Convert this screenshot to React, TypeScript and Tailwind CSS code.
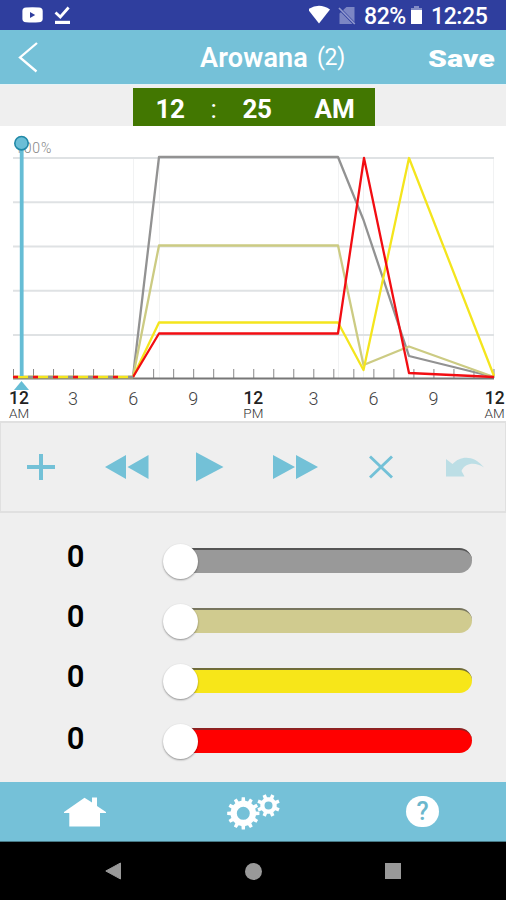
import React from "react";

const BLUE = "#73c1d7";

function gearPath(cx: number, cy: number, outer: number, inner: number, hole: number, teeth: number, phase: number) {
  const pts: string[] = [];
  const step = (Math.PI * 2) / teeth;
  const at = (r: number, a: number) => `${(cx + r * Math.cos(a)).toFixed(2)} ${(cy + r * Math.sin(a)).toFixed(2)}`;
  for (let i = 0; i < teeth; i++) {
    const a = phase + i * step;
    pts.push(at(inner, a - step * 0.28), at(outer, a - step * 0.19), at(outer, a + step * 0.19), at(inner, a + step * 0.28));
  }
  return `M${pts.join("L")}Z M${cx - hole} ${cy}a${hole} ${hole} 0 1 0 ${hole * 2} 0a${hole} ${hole} 0 1 0 ${-hole * 2} 0Z`;
}

function StatusBar() {
  return (
    <div className="flex h-[30px] items-center bg-[#2f3e9e] pr-[18px] pl-[22px] text-white">
      <svg width="50" height="30" viewBox="0 0 50 30" fill="white">
        <path fillRule="evenodd" d="M4 7.6Q10.500 7 17 7.600Q20.700 7.800 20.700 11V19Q20.700 22 17 22.300Q10.500 22.900 4 22.300Q.4 22 .4 19V11Q.4 7.800 4 7.600ZM8 12V18L13.200 15Z" />
        <path d="M33 20.800H48V24H33Z" />
        <path d="M33.500 12.500L38.300 17L46.600 7.500" fill="none" stroke="white" strokeWidth="2.800" />
      </svg>
      <svg className="ml-auto" width="52" height="30" viewBox="0 0 52 30">
        <path d="M.5 9.500Q11.500 2 22.500 9.500L11.500 23.500Z" fill="white" transform="translate(-1.500 0)" />
        <path d="M35 9.300L37.500 7H45.500V24H30.500V13.500Z" fill="#7c86c4" />
        <path d="M28.500 6.500L46.500 25" stroke="#2f3e9e" strokeWidth="3" />
        <path d="M30 8L45.800 24" stroke="#929ace" strokeWidth="1.700" />
      </svg>
      <span className="mt-[4px] ml-[3px] w-[41px] text-[23px] leading-[30px] font-medium tracking-[-0.4px]">82%</span>
      <svg className="ml-[5px]" width="13" height="30" viewBox="0 0 13 30">
        <path d="M4 6H9V8H12V24H1V8H4Z" fill="#818bc6" />
        <path d="M1 10H12V24H1Z" fill="white" />
      </svg>
      <span className="mt-[4px] ml-[8px] w-[57px] text-[23px] leading-[30px] font-medium tracking-[-0.4px]">12:25</span>
    </div>
  );
}

function Header() {
  return (
    <header className="flex h-[55px] items-center border-b border-[#e6f3f6] bg-[#75c1d8] pr-[11px] pl-[18px] text-white">
      <svg width="22" height="34" viewBox="0 0 22 34" fill="none" stroke="white" strokeWidth="2.300">
        <path d="M19 3L2 17.500L18.500 31.500" />
      </svg>
      <h1 className="ml-[160px] w-[108px] pt-px text-[27px] leading-[54px] font-semibold tracking-[0.2px]">Arowana</h1>
      <span className="ml-[9px] pt-[2px] text-[23px] tracking-[-0.3px]">(2)</span>
      <span className="ml-auto w-[67px] origin-left scale-x-[1.26] pt-[3px] text-[24px] font-black">Save</span>
    </header>
  );
}

function TimeRow() {
  return (
    <div className="flex h-[41px] justify-center bg-[#efefef] pt-[3px] pl-px text-[26px] leading-[42px] font-bold text-white">
      <div className="flex w-[242px] bg-[#427701] pl-[23px]">
        <span className="w-[55px] tracking-[-0.4px]">12</span>
        <span className="w-[32px] font-normal">:</span>
        <span className="w-[72px] tracking-[-0.4px]">25</span>
        <span>AM</span>
      </div>
    </div>
  );
}

const SERIES = [
  { color: "#929292", points: "13,251 133,251 159,31 338,31 363.500,94 409,230 494,251" },
  { color: "#cccb83", points: "133,251 159,119.500 338,119.500 363.500,239 409,220.500 494,251" },
  { color: "#f4e51d", points: "133,251 159,196.500 338,196.500 363.500,244 409,32 494,250" },
  { color: "#f20d12", points: "133,251 159,207.500 338,207.500 364,32 409,247 494,251" },
];
const HOURS = ["12", "3", "6", "9", "12", "3", "6", "9", "12"];
const PERIOD: Record<number, string> = { 0: "AM", 4: "PM", 8: "AM" };

function Chart() {
  return (
    <section className="h-[295px] bg-white">
      <svg className="block" width="506" height="264" viewBox="0 0 506 264">
        <text x="15" y="27" fontSize="14" fontWeight="300" letterSpacing="0.9" fill="#858585">100%</text>
        {[133.5, 159.5, 338.5, 363.5, 408.5, 493.5].map((x) => (
          <path key={x} d={`M${x} 32V252`} stroke="#f1f2f3" strokeWidth="1" />
        ))}
        {[32, 76.2, 120.5, 164.800, 209].map((y) => (
          <path key={y} d={`M13 ${y}H494`} stroke="#dfe2e4" strokeWidth="2" />
        ))}
        {Array.from({ length: 25 }, (_, i) => (
          <path key={i} d={`M${13.5 + i * 20.020} 243V252`} stroke="#888" strokeWidth="1" />
        ))}
        <path d="M13 252.500H494" stroke="#777" strokeWidth="2" />
        {SERIES.map((s) => (
          <polyline key={s.color} points={s.points} fill="none" stroke={s.color} strokeWidth="2.300" strokeLinejoin="round" />
        ))}
        <path d="M13 251H133" stroke="#f4e51d" strokeWidth="2.300" />
        <path d="M13 251H133" stroke="#f20d12" strokeWidth="2.300" strokeDasharray="5 15" />
        <path d="M28 251H133" stroke="#929292" strokeWidth="2.300" strokeDasharray="5 15" />
        <path d="M21.700 20V250" stroke="#66bdd5" strokeWidth="3.800" />
        <circle cx="21.500" cy="17.200" r="6.700" fill="#6bbed6" stroke="#2189a7" strokeWidth="1.600" />
        <path d="M21.500 255L29 264H14Z" fill="#66bdd5" />
      </svg>
      <div className="grid grid-cols-[43px_repeat(7,60.1px)_42px] text-center">
        {HOURS.map((h, i) => (
          <div key={i} className={i === 0 ? "pr-[5px]" : i === 8 ? "pl-[20px]" : ""}>
            <div className={PERIOD[i] ? "text-[17.5px] leading-[17px] font-medium text-[#222]" : "text-[18px] leading-[17px] font-light text-[#444]"}>{h}</div>
            {PERIOD[i] && <div className="text-[13.5px] leading-[12px] font-light text-[#333]">{PERIOD[i]}</div>}
          </div>
        ))}
      </div>
    </section>
  );
}

function Controls() {
  return (
    <section className="flex h-[92px] items-center border border-t-2 border-b-2 border-[#e0e0e0] bg-[#efefef] pl-[26px]">
      <svg width="28" height="30" viewBox="0 0 28 30"><path d="M0 15H28M14 2V28" stroke={BLUE} strokeWidth="4" /></svg>
      <svg className="ml-[50px]" width="44" height="30" viewBox="0 0 44 30" fill={BLUE}><path d="M0 15L21 3V27ZM22.500 15L43.500 3V27Z" /></svg>
      <svg className="ml-[47px]" width="28" height="30" viewBox="0 0 28 30" fill={BLUE}><path d="M0 .3V29.500L27.500 15Z" /></svg>
      <svg className="ml-[49px]" width="46" height="30" viewBox="0 0 46 30" fill={BLUE}><path d="M0 3L22 15L0 27ZM23 3L45 15L23 27Z" /></svg>
      <svg className="ml-[50px]" width="24" height="30" viewBox="0 0 24 30"><path d="M1 4.500L23 25.500M23 4.500L1 25.500" stroke={BLUE} strokeWidth="2.900" /></svg>
      <svg className="ml-[53px]" width="38" height="30" viewBox="0 0 38 30" fill="#bcdee5"><path d="M0 7L6.500 12C14 3.500 28 2.500 38 15.500C29 9.500 19 11 15.500 19L18.500 24.500H0Z" /></svg>
    </section>
  );
}

function Sliders() {
  const rows = [
    { track: "bg-[#999999]", edge: "border-[#555555]", label: "mt-[-6px]" },
    { track: "bg-[#d0cb8f]", edge: "border-[#77755e]", label: "mt-[-6px]" },
    { track: "bg-[#f7e619]", edge: "border-[#706c38]", label: "mt-[-6px]" },
    { track: "bg-[#ff0000]", edge: "border-[#8e2020]", label: "mt-[-2px]" },
  ];
  return (
    <section className="h-[269px] bg-[#efefef] pt-[17px]">
      {rows.map((r) => (
        <div key={r.track} className="flex h-[60px] items-center">
          <span className={`w-[151px] text-center text-[31px] leading-[32px] font-semibold text-black ${r.label}`}>0</span>
          <div className={`ml-[16px] flex h-[25px] w-[305px] items-center rounded-full border-t-2 ${r.track} ${r.edge}`}>
            <div className="-ml-[4px] size-[35px] shrink-0 rounded-full bg-white shadow-[0_1px_2px_rgba(0,0,0,0.4)]" />
          </div>
        </div>
      ))}
    </section>
  );
}

function BottomBar() {
  return (
    <nav className="flex h-[60px] items-center border-b border-[#477985] bg-[#75c1d8]">
      <svg className="ml-[64px]" width="42" height="40" viewBox="0 0 42 40" fill="white"><path d="M0 20L20.500 5.700L28 10.500V5.500H33V14L42 20V21H36V34.500H5.300V21H0Z" /></svg>
      <svg className="ml-[120px]" width="56" height="40" viewBox="0 0 56 40" fill="white" fillRule="evenodd">
        <path d={gearPath(17.3, 21.3, 16.2, 12.8, 6.5, 12, -Math.PI / 2)} />
        <path d={gearPath(42.500, 13.500, 11.500, 8.3, 4, 8, -Math.PI / 8)} />
      </svg>
      <div className="mt-[-1px] ml-[124px] flex h-[31px] w-[33px] items-center justify-center rounded-full bg-white text-[25px] leading-[31px] font-medium text-[#6bb7cd]">?</div>
    </nav>
  );
}

function SystemNav() {
  return (
    <div className="flex h-[58px] items-center bg-black">
      <svg className="ml-[105px]" width="17" height="20" viewBox="0 0 17 20"><path d="M.8 10L15.500 2V18Z" fill="#999" stroke="#999" strokeLinejoin="round" /></svg>
      <div className="ml-[123px] size-[17px] rounded-full bg-[#999]" />
      <div className="ml-[123px] size-[16px] bg-[#999]" />
    </div>
  );
}

export default function App() {
  return (
    <main className="h-[900px] w-[506px] overflow-hidden bg-[#efefef] font-['Roboto',sans-serif]">
      <StatusBar />
      <Header />
      <TimeRow />
      <Chart />
      <Controls />
      <Sliders />
      <BottomBar />
      <SystemNav />
    </main>
  );
}
